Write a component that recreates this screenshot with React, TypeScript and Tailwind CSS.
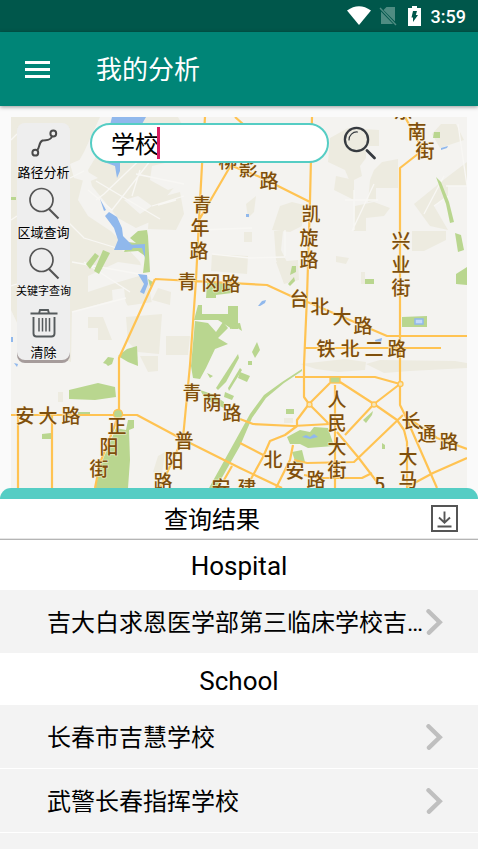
import { useState } from 'react';
import type { ReactNode } from 'react';

interface ResultGroup {
    title: string;
    items: string[];
}

const groups: ResultGroup[] = [
    { title: 'Hospital', items: ['吉大白求恩医学部第三临床学校吉…'] },
    { title: 'School', items: ['长春市吉慧学校', '武警长春指挥学校'] },
];

// land parcels, slightly darker than the base
const parcels = [
    'M11 117H100L84 152 76 166 84 176 78 200 88 216 112 232 140 262 148 290 72 312 71 362 30 350 11 310Z',
    'M110 125L124 117H178L186 132 188 150 182 178 160 204 150 222 136 228 118 218 92 186 88 170 100 150Z',
    'M88 317H103L112 340H98V328H88Z',
    'M126 317L162 314 159 354 138 352 128 342Z',
    'M118 290L148 280 152 304 128 306Z',
    'M150 200L180 192 184 214 176 230 148 229Z',
    'M158 288L171 292 170 305 152 300Z',
    'M166 336H190L188 355H166Z',
    'M212 254L248 256 247 274 211 271Z',
    'M244 232H252V242H244Z',
    'M246 204L256 196 254 212 248 218Z',
    'M280 206L292 202 304 205 302 226 290 232 272 230Z',
    'M274 231H283L281 250 287 262 284 276 276 260Z',
    'M276 262L298 260 299 280 284 284Z',
    'M330 138L348 128 379 130V146H366V158L360 166 362 176 350 182 345 170 328 162Z',
    'M336 176L354 180V200L334 190Z',
    'M374 170L382 162 398 159V188H376V200L368 202 370 180Z',
    'M355 206L374 202 390 208 384 216 366 218 366 231H354Z',
    'M414 204L446 178 467 162V186H448V196L434 206 448 230 430 226Z',
    'M441 124H456L464 140 440 148 432 134Z',
    'M412 231H446V240L424 251H412Z',
    'M336 256L349 258 346 264 336 262Z',
    'M361 272H365V284H361Z',
    'M300 364L345 359 366 362 365 370 338 372 316 369Z',
    'M366 364L380 360 455 361 467 363V368L410 371 384 373Z',
    'M140 356H158V371L148 372Z',
    'M58 392H63V402H58Z',
    'M158 456L165 452 162 474 153 472Z',
    'M284 418H293V423H284Z',
];

const clearings = [
    'M70 164L84 158 88 172 98 178 88 182 74 178Z',
    'M152 166L186 158V184L168 190 150 180Z',
    'M88 276L118 262 146 266 146 274 112 284 88 292Z',
    'M112 290L124 288 126 306 152 302V312L114 318Z',
    'M124 200L138 196 152 206 140 214Z',
];

const lanes = [
    'M70 178L84 171M96 181L160 219M88 190L112 210 154 156M96 200L104 194 150 150',
    'M72 262L150 276M60 214L84 238 130 252M84 262L130 292M72 312L126 298',
    'M150 127L146 150 186 156M162 128V150M136 174L184 184M140 170L132 196M152 206L184 196',
    'M11 140L17 134M11 220L17 216M11 286L17 284',
    'M354 190V230M345 200H378M374 184L352 231M444 176L424 214M458 124L467 186M446 186H467',
    'M158 205L176 200M212 254L250 258 285 257M285 230V256M200 230L252 228M434 206L448 196',
];

const parks = [
    'M86 264L95 253 99 256 90 269Z',
    'M94 271L103 250 110 253 99 274Z',
    'M138 231L147 230 148 236 150 272 143 273 145 256 138 251 124 252 128 242 136 243 130 238Z',
    'M148 279L153 282 150 287Z',
    'M11 197H16V200H11Z',
    'M118 356L127 349 137 346 138 366 128 362Z',
    'M103 363L108 357 114 358 112 364 108 366 106 364Z',
    'M69 390L98 383 115 387 116 397 95 400 69 399Z',
    'M42 434L51 433V439H42Z',
    'M78 412H90V414H78Z',
    'M128 420H134V428L129 430 130 460 128 488H95L101 464 112 438 116 428 126 430Z',
    'M207 283H232V293L216 295V298H206Z',
    'M198 305H202V314H228V306H238V329H232L218 320 194 320Z',
    'M195 321L208 323 216 332 223 322 228 328 218 338 228 344 215 349 206 368 200 379 193 378 191 366Z',
    'M230 324L240 323 242 331 236 327 230 329Z',
    'M257 342L260 350 255 358 252 352Z',
    'M238 354L239 358 226 382 218 390 216 388Z',
    'M248 361H252V365H248Z',
    'M290 275L292 266 296 266V272Z',
    'M288 284L294 277 295 281 290 286Z',
    'M207 373L213 376 210 378Z',
    'M200 390L212 394 224 402V408L206 400Z',
    'M228 388L240 368 242 370 229 391Z',
    'M240 372L250 376 247 382 238 378Z',
    'M225 392L234 396 232 400 224 397Z',
    'M302 371L284 383 266 398 252 418 240 446 216 488H209L234 443 250 414 264 395 282 382 302 369Z',
    'M434 132H440V138H433Z',
    'M455 233L461 235 464 250 458 252Z',
    'M456 274L467 267V285L456 284Z',
    'M436 177L441 182 449 202 454 222 450 223 446 204Z',
    'M365 279H374V284H365Z',
    'M402 317L427 316V327H402Z',
    'M287 437L300 430 310 432 314 427 328 428 334 446 308 448 300 444 290 444Z',
    'M286 409H294V414H286Z',
    'M292 452L302 450 305 462 296 464Z',
    'M363 420L373 411 372 415 366 423Z',
    'M382 443L385 445V449H382Z',
];

const waters = [
    'M112 117H146L142 124 128 123 122 127 110 125Z',
    'M104 162L120 160 120 171 117 178 115 166Z',
    'M105 216L109 212 117 217 122 228 123 236 134 247 131 250 114 250 118 240 114 228Z',
    'M100 199L106 210 104 211Z',
    'M138 274L147 275 148 284 144 294 140 292 144 284Z',
    'M128 245L145 244 145 258 142 248 134 248Z',
    'M258 306L262 301 266 300 265 303 260 306Z',
    'M375 340L382 338 381 343 376 344Z',
    'M302 437L306 435 310 437 314 434 318 437 310 439Z',
    'M441 148L448 146 447 148 441 150Z',
    'M11 337H13V342H11Z',
    'M246 214H249V217H246Z',
    'M14 363L18 364 17 367Z',
];

const roads = [
    'M155 279L119 358V413',
    'M11 415H137L180 438 240 468 282 488',
    'M18 415V488M52 415V488',
    'M118 413L115 425 100 463 95 488',
    'M205 117L202 165 199 220 196 280 190 365 183 438 160 488',
    'M235 117L243 124M231 165L199 220M232 166L260 177 310 202',
    'M312 117L310 200 307 297 304 365V397L309 404 330 425',
    'M155 279L267 285 293 297 310 303 387 336H467',
    'M304 348H441',
    'M405 117L423 150 400 168V405L405 415 437 488',
    'M295 377H375L400 384 374 404 345 435',
    'M340 382L374 404 397 420 404 430 407 442V488',
    'M330 383L309 404 297 420V426L285 435 270 441 263 457 246 488',
    'M335 385V488',
    'M240 419L253 424 293 426 330 424',
    'M240 443L267 457M293 445L290 460 276 488',
    'M403 415L354 462 307 463 294 460',
    'M337 432L358 457 377 482M304 475L320 478H362L372 473',
    'M405 416L437 438 467 449M407 487L433 473 467 458',
    'M232 466L224 480',
];

// each label is a run of glyphs placed along its road
const labels: [string, number, number][] = [
    ['东', 403, 111], ['南', 417, 132], ['街', 425, 151],
    ['柳', 228, 161], ['影', 248, 169], ['路', 269, 181],
    ['青', 202, 205], ['年', 200, 228], ['路', 199, 251],
    ['凯', 311, 214], ['旋', 309, 238], ['路', 309, 260],
    ['兴', 401, 241], ['业', 401, 265], ['街', 401, 288],
    ['青', 187, 282], ['冈', 211, 283], ['路', 231, 284],
    ['台', 299, 299], ['北', 320, 307], ['大', 342, 317], ['路', 363, 326],
    ['铁', 326, 349], ['北', 350, 349], ['二', 374, 349], ['路', 397, 349],
    ['青', 192, 393], ['荫', 212, 403], ['路', 232, 413],
    ['安', 25, 416], ['大', 48, 416], ['路', 71, 416],
    ['正', 117, 426], ['阳', 109, 447], ['街', 99, 469],
    ['普', 184, 441], ['阳', 174, 461], ['路', 163, 482],
    ['人', 337, 400], ['民', 337, 423], ['大', 337, 447], ['街', 337, 470],
    ['北', 273, 460], ['安', 295, 471], ['路', 316, 480],
    ['长', 411, 421], ['通', 427, 434], ['路', 449, 442],
    ['大', 408, 457], ['马', 408, 480], ['5', 380, 484],
    ['安', 221, 488], ['建', 247, 488],
];

function CityMap() {
    return (
        <svg className="block w-full" viewBox="11 117 456 371" role="img" aria-label="地图">
            <rect x="11" y="117" width="456" height="371" fill="#f4f3f0" />
            <g fill="#edebe0">
                {parcels.map((d) => <path key={d} d={d} />)}
            </g>
            <g fill="#f4f3f0">
                {clearings.map((d) => <path key={d} d={d} />)}
            </g>
            <path d={lanes.join('')} fill="none" stroke="#f8f7f4" strokeWidth="1.3" />
            <g fill="#b9d68f">
                {parks.map((d) => <path key={d} d={d} />)}
            </g>
            <g fill="#90b8ec">
                {waters.map((d) => <path key={d} d={d} />)}
            </g>
            <rect x="415" y="319" width="8" height="5" fill="#c3daf7" stroke="#90b8ec" strokeWidth="1.5" />
            <path d={roads.join('')} fill="none" stroke="#ffc352" strokeWidth="2.2" strokeLinejoin="round" />
            <g fill="#f4e6bc" stroke="#ffc352" strokeWidth="1.3">
                <circle cx="118" cy="414" r="4.5" fill="#b9d68f" />
                <circle cx="309.5" cy="404.5" r="2.5" />
                <circle cx="374" cy="404.5" r="2.5" />
                <circle cx="400.5" cy="384" r="2.5" />
                <rect x="330" y="377" width="10" height="6" fill="#b9d68f" />
            </g>
            <g
                className="font-['Noto_Sans_CJK_SC',sans-serif] text-[19px] font-medium"
                fill="#7f4f0c"
                stroke="#fdf3da"
                strokeOpacity="0.6"
                strokeWidth="1.5"
                paintOrder="stroke"
                textAnchor="middle"
            >
                {labels.map(([char, x, y], i) => (
                    <text key={i} x={x} y={y + 7}>{char}</text>
                ))}
            </g>
        </svg>
    );
}

function RouteIcon() {
    return (
        <svg className="w-[30px] h-[30px]" viewBox="0 0 30 30" fill="none" stroke="#4a4a4a" strokeWidth="2">
            <circle cx="24.3" cy="5.5" r="2.9" />
            <circle cx="6.3" cy="24.7" r="2.9" />
            <path d="M8 22.500C11 20 9.500 14 13.500 12.500C17 11.500 21 13.500 23 8.500" />
        </svg>
    );
}

function LensIcon() {
    return (
        <svg className="w-[30px] h-[30px] overflow-visible" viewBox="0 0 30 30" fill="none" stroke="#555" strokeWidth="1.7">
            <circle cx="12.5" cy="12" r="11.5" />
            <path d="M19.500 20.500L29.500 30.500" strokeWidth="2.1" />
        </svg>
    );
}

function TrashIcon() {
    return (
        <svg className="w-[30px] h-[30px]" viewBox="0 0 30 30" fill="none" stroke="#555a5c" strokeWidth="1.9">
            <path d="M1.500 5.500H28.500M10 5.500L11 2H19L20 5.500" />
            <path d="M4.500 9V25.500Q4.500 28.500 7.500 28.500H22.500Q25.500 28.500 25.500 25.500V9" />
            <path d="M10 10V23.500M13.500 10V23.500M17 10V23.500M20.500 10V23.500" strokeWidth="1.5" />
        </svg>
    );
}

const tools: { label: string; icon: ReactNode; small?: boolean }[] = [
    { label: '路径分析', icon: <RouteIcon /> },
    { label: '区域查询', icon: <LensIcon /> },
    { label: '关键字查询', icon: <LensIcon />, small: true },
    { label: '清除', icon: <TrashIcon /> },
];

function StatusBar() {
    return (
        <div className="flex items-center justify-end h-8 pr-3 bg-[#00574b] text-white">
            <svg className="w-6 h-5" viewBox="0 0 24 20" fill="currentColor">
                <path d="M12 19L0 4.500Q12 -4 24 4.500Z" />
            </svg>
            <svg className="w-[18px] h-5 ml-2" viewBox="0 0 18 20">
                <path d="M7.500 1H16V15.500L4.500 4ZM2 5.500L14 18H2Z" fill="#4f8c82" />
                <path d="M1 2L17 19" stroke="#4f8c82" strokeWidth="1.4" />
            </svg>
            <svg className="w-[13px] h-5 ml-[11px]" viewBox="0 0 13 20">
                <path d="M4 0H9V2H13V20H0V2H4Z" fill="#fff" />
                <path d="M5 5H9L7.800 9H10L5 16V11.500H3.500Z" fill="#00574b" />
            </svg>
            <span className="ml-[10px] pt-0.5 text-[18px] leading-5 font-medium">3:59</span>
        </div>
    );
}

function AppBar() {
    return (
        <header className="relative z-10 flex items-center h-[74px] pl-[25px] bg-[#008577] text-white shadow-[0_1px_4px_rgba(0,0,0,0.4)]">
            <button aria-label="菜单">
                <svg className="w-[25px] h-[17px]" viewBox="0 0 25 17" fill="currentColor">
                    <path d="M0 0H25V3H0ZM0 7H25V10H0ZM0 14H25V17H0Z" />
                </svg>
            </button>
            <h1 className="ml-[46px] pt-0.5 text-[26px] leading-9">我的分析</h1>
        </header>
    );
}

function SearchForm() {
    const [keyword, setKeyword] = useState('学校');

    return (
        <form className="flex flex-1 items-start ml-5 mr-[90px]" onSubmit={(e) => e.preventDefault()}>
            <div className="relative flex-1">
                <input
                    aria-label="关键字"
                    value={keyword}
                    onChange={(e) => setKeyword(e.target.value)}
                    className="block w-full h-10 pb-0.5 pl-[19px] pr-4 rounded-full border-2 border-[#55cdc4] bg-white text-[24px] text-black outline-none"
                />
                <span className="absolute left-[67px] top-1 w-[3px] h-8 bg-[#d81b60]" />
            </div>
            <button type="submit" aria-label="搜索" className="ml-[14px] mt-[3px]">
                <svg className="w-[34px] h-[34px]" viewBox="0 0 34 34" fill="none" stroke="#373b40" strokeLinecap="round">
                    <circle cx="13.5" cy="13.5" r="11.6" strokeWidth="2.3" />
                    <path d="M6 14A7.800 7.800 0 0 1 14.500 6" strokeWidth="1.2" />
                    <path d="M24 24.500L31.500 32" strokeWidth="2.8" />
                </svg>
            </button>
        </form>
    );
}

function Toolbar() {
    return (
        <div className="w-[53px] rounded-lg bg-[#eee] shadow-[inset_0_-3px_0_#a69c9b]">
            {tools.map((tool) => (
                <button key={tool.label} className="flex flex-col items-center gap-[6px] w-full h-[60px] pt-[5px] text-black whitespace-nowrap">
                    {tool.icon}
                    <span className={tool.small ? 'text-[11px] leading-4' : 'text-[13px] leading-[18px]'}>{tool.label}</span>
                </button>
            ))}
        </div>
    );
}

function Results() {
    return (
        <section className="flex-1 min-h-0 overflow-hidden bg-[#f3f3f3] rounded-t-[11px]">
            <div className="h-[11px] bg-[#55cdc4]" />
            <div className="relative flex items-center h-10 bg-white border-b border-[#e6e6e6] shadow-[0_1px_0_#b5b5b5]">
                <h2 className="flex-1 pt-0.5 text-center text-[24px] leading-8">查询结果</h2>
                <button aria-label="下载" className="ml-[7px] mr-5">
                    <svg className="w-[27px] h-[27px]" viewBox="0 0 27 27" fill="none" stroke="#555">
                        <rect x="1" y="1" width="25" height="25" strokeWidth="2" />
                        <path d="M13.500 6.500V17.500M8 12.500L13.500 17.800L19 12.500M6.500 21.500H20.500" strokeWidth="1.9" />
                    </svg>
                </button>
            </div>
            {groups.map((group) => (
                <div key={group.title}>
                    <h3 className="flex items-center justify-center h-[51px] pt-[3px] bg-white text-[26px]">{group.title}</h3>
                    <ul>
                        {group.items.map((item) => (
                            <li key={item} className="border-b border-white">
                                <a href="#" className="flex items-center h-[63px] pl-[47px] pr-[35px]">
                                    <span className="flex-1 min-w-0 pt-0.5 overflow-hidden whitespace-nowrap text-[24px] leading-8">{item}</span>
                                    <svg className="w-[17px] h-[26px] shrink-0" viewBox="0 0 17 26" fill="none" stroke="#bfbfbf" strokeWidth="4.4">
                                        <path d="M2.500 2.300L13.700 13.300L3 23.700" strokeLinecap="round" />
                                    </svg>
                                </a>
                            </li>
                        ))}
                    </ul>
                </div>
            ))}
        </section>
    );
}

export default function App() {
    return (
        <div className="flex flex-col h-screen overflow-hidden bg-[#fafafa] text-black font-[Roboto,'Noto_Sans_CJK_SC',sans-serif]">
            <StatusBar />
            <AppBar />
            <main className="relative shrink-0 px-[11px] pt-[11px]">
                <CityMap />
                <div className="absolute inset-x-[11px] top-[11px] flex items-start pt-[6px] pl-[6px]">
                    <Toolbar />
                    <SearchForm />
                </div>
            </main>
            <Results />
        </div>
    );
}
